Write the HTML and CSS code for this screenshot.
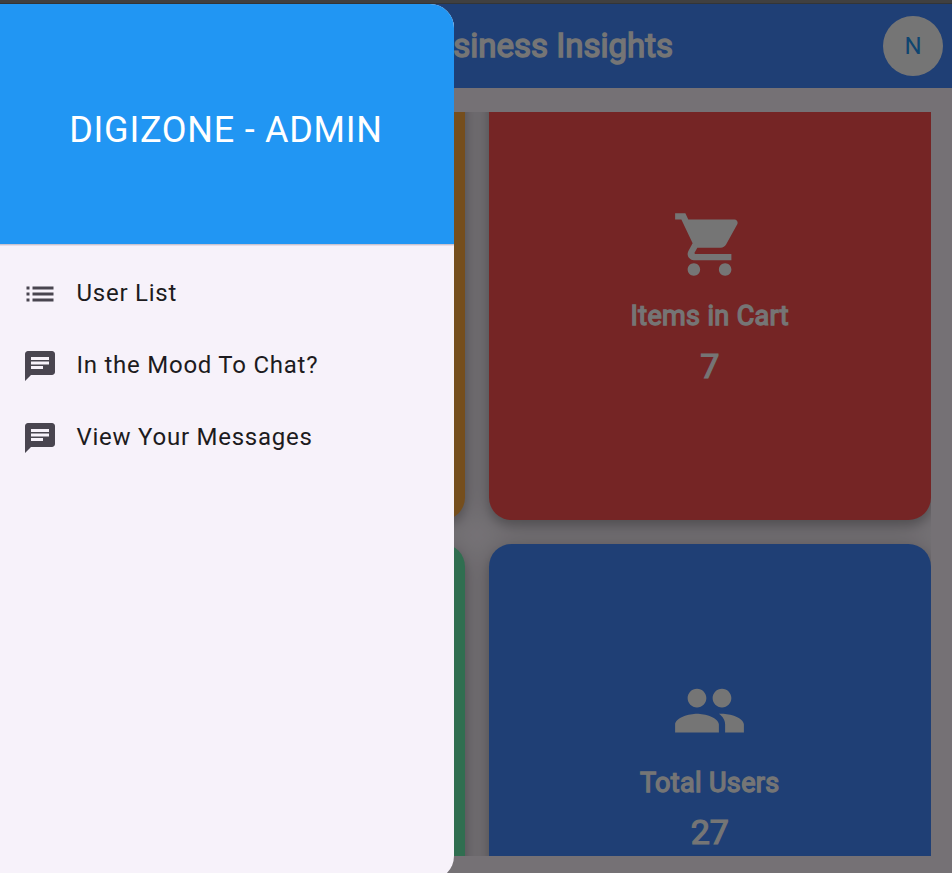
FILE: index.html
```html
<!DOCTYPE html>
<html lang="en">
<head>
<meta charset="utf-8">
<title>Business Insights</title>
<link rel="stylesheet" href="styles.css">
</head>
<body>
<div class="window-edge"></div>
<div class="app">
  <header class="app-bar">
    <h1 class="app-title">Business Insights</h1>
    <div class="avatar">N</div>
  </header>
  <main class="grid-viewport">
    <div class="card-grid">
      <section class="card orange"></section>
      <section class="card red">
        <svg class="card-icon" viewBox="0 0 24 24"><path d="M7 18c-1.1 0-1.99.9-1.99 2S5.9 22 7 22s2-.9 2-2-.9-2-2-2zM1 2v2h2l3.6 7.59-1.35 2.45c-.16.28-.25.61-.25.96 0 1.1.9 2 2 2h12v-2H7.42c-.14 0-.25-.11-.25-.25l.03-.12.9-1.63h7.45c.75 0 1.41-.41 1.75-1.03l3.58-6.49c.08-.14.12-.31.12-.48 0-.55-.45-1-1-1H5.21l-.94-2H1zm16 16c-1.1 0-1.99.9-1.99 2s.89 2 1.99 2 2-.9 2-2-.9-2-2-2z"/></svg>
        <h2 class="card-label">Items in Cart</h2>
        <p class="card-value">7</p>
      </section>
      <section class="card green"></section>
      <section class="card blue">
        <svg class="card-icon" viewBox="0 0 24 24"><path d="M16 11c1.66 0 2.99-1.34 2.99-3S17.66 5 16 5s-3 1.34-3 3 1.34 3 3 3zm-8 0c1.66 0 2.99-1.34 2.99-3S9.66 5 8 5 5 6.34 5 8s1.34 3 3 3zm0 2c-2.33 0-7 1.17-7 3.5V19h14v-2.5c0-2.33-4.67-3.5-7-3.5zm8 0c-.29 0-.62.02-.97.05 1.16.84 1.97 1.97 1.97 3.45V19h6v-2.5c0-2.33-4.67-3.5-7-3.5z"/></svg>
        <h2 class="card-label">Total Users</h2>
        <p class="card-value">27</p>
      </section>
    </div>
  </main>
  <div class="scrim"></div>
  <aside class="drawer">
    <div class="drawer-header">DIGIZONE - ADMIN</div>
    <nav class="drawer-list">
      <a class="tile"><svg class="tile-icon" viewBox="0 0 24 24"><path d="M3 13h2v-2H3v2zm0 4h2v-2H3v2zm0-8h2V7H3v2zm4 4h14v-2H7v2zm0 4h14v-2H7v2zM7 7v2h14V7H7z"/></svg><span class="tile-text">User List</span></a>
      <a class="tile"><svg class="tile-icon" viewBox="0 0 24 24"><path d="M20 2H4c-1.1 0-1.99.9-1.99 2L2 22l4-4h14c1.1 0 2-.9 2-2V4c0-1.1-.9-2-2-2zM6 9h12v2H6V9zm8 5H6v-2h8v2zm4-6H6V6h12v2z"/></svg><span class="tile-text">In the Mood To Chat?</span></a>
      <a class="tile"><svg class="tile-icon" viewBox="0 0 24 24"><path d="M20 2H4c-1.1 0-1.99.9-1.99 2L2 22l4-4h14c1.1 0 2-.9 2-2V4c0-1.1-.9-2-2-2zM6 9h12v2H6V9zm8 5H6v-2h8v2zm4-6H6V6h12v2z"/></svg><span class="tile-text">View Your Messages</span></a>
    </nav>
  </aside>
</div>
</body>
</html>
```
FILE: styles.css
```css
* { box-sizing: border-box; margin: 0; padding: 0; }
body {
  width: 952px;
  height: 873px;
  overflow: hidden;
  font-family: Roboto, "Liberation Sans", sans-serif;
  background: #404040;
}
.window-edge { height: 4px; background: #404040; border-bottom: 1px solid #333537; }
.app {
  position: relative;
  height: 869px;
  overflow: hidden;
  background: #fef7ff;
  display: flex;
  flex-direction: column;
}
.app-bar {
  flex: none;
  height: 84px;
  padding: 0 9px 0 279px;
  display: flex;
  align-items: center;
  justify-content: space-between;
  background: #448aff;
}
.app-title {
  width: 394px;
  padding-bottom: 2px;
  text-align: right;
  white-space: nowrap;
  font-size: 33px;
  font-weight: 400;
  color: #fff;
  -webkit-text-stroke: 1.4px #fff;
}
.avatar {
  width: 60px;
  height: 60px;
  border-radius: 50%;
  background: #fff;
  color: #2196f3;
  display: flex;
  align-items: center;
  justify-content: center;
  font-size: 24px;
}
.grid-viewport {
  flex: none;
  margin: 24px 21px 0 22px;
  height: 744px;
  overflow: hidden;
  display: flex;
  flex-direction: column;
  justify-content: flex-start;
}
.card-grid {
  flex: none;
  margin-top: -35px;
  display: grid;
  grid-template-columns: 1fr 1fr;
  grid-auto-rows: 442.5px;
  gap: 24px;
}
.card {
  border-radius: 22.5px;
  display: flex;
  flex-direction: column;
  align-items: center;
  justify-content: center;
  color: #fff;
  box-shadow: 0 6px 10px rgba(0,0,0,.16), 0 3px 24px rgba(0,0,0,.24);
}
.orange { background: #ffab40; }
.red { background: #ff5252; }
.green { background: #69f0ae; }
.blue { background: #448aff; }
.card-icon { width: 75px; height: 75px; fill: #fff; }
.card-label {
  margin-top: 15.5px;
  font-size: 27px;
  line-height: 38px;
  font-weight: 400;
  letter-spacing: .35px;
  -webkit-text-stroke: 1.3px #fff;
}
.card-value {
  margin-top: 6.5px;
  font-size: 34px;
  line-height: 48px;
  -webkit-text-stroke: 1.2px #fff;
}
.scrim { position: absolute; inset: 0; background: rgba(0,0,0,.54); }
.drawer {
  position: absolute;
  left: 0;
  top: 0;
  width: 454px;
  height: 876px;
  border-radius: 0 24px 24px 0;
  overflow: hidden;
  background: #f7f2fa;
}
.drawer-header {
  height: 241px;
  padding: 12px 2px 0 0;
  display: flex;
  align-items: center;
  justify-content: center;
  background: #2196f3;
  border-bottom: 1px solid #cac4d0;
  box-shadow: 0 1px 0 #e5deea;
  color: #fff;
  font-size: 36px;
  letter-spacing: .75px;
}
.drawer-list { padding-top: 12.5px; display: flex; flex-direction: column; }
.tile { height: 72px; padding-left: 22px; display: flex; align-items: center; }
.tile-icon { width: 36px; height: 36px; fill: #49454f; }
.tile-text { margin-left: 18.5px; padding-bottom: 2px; font-size: 24px; letter-spacing: .75px; color: #1d1b20; }
```
